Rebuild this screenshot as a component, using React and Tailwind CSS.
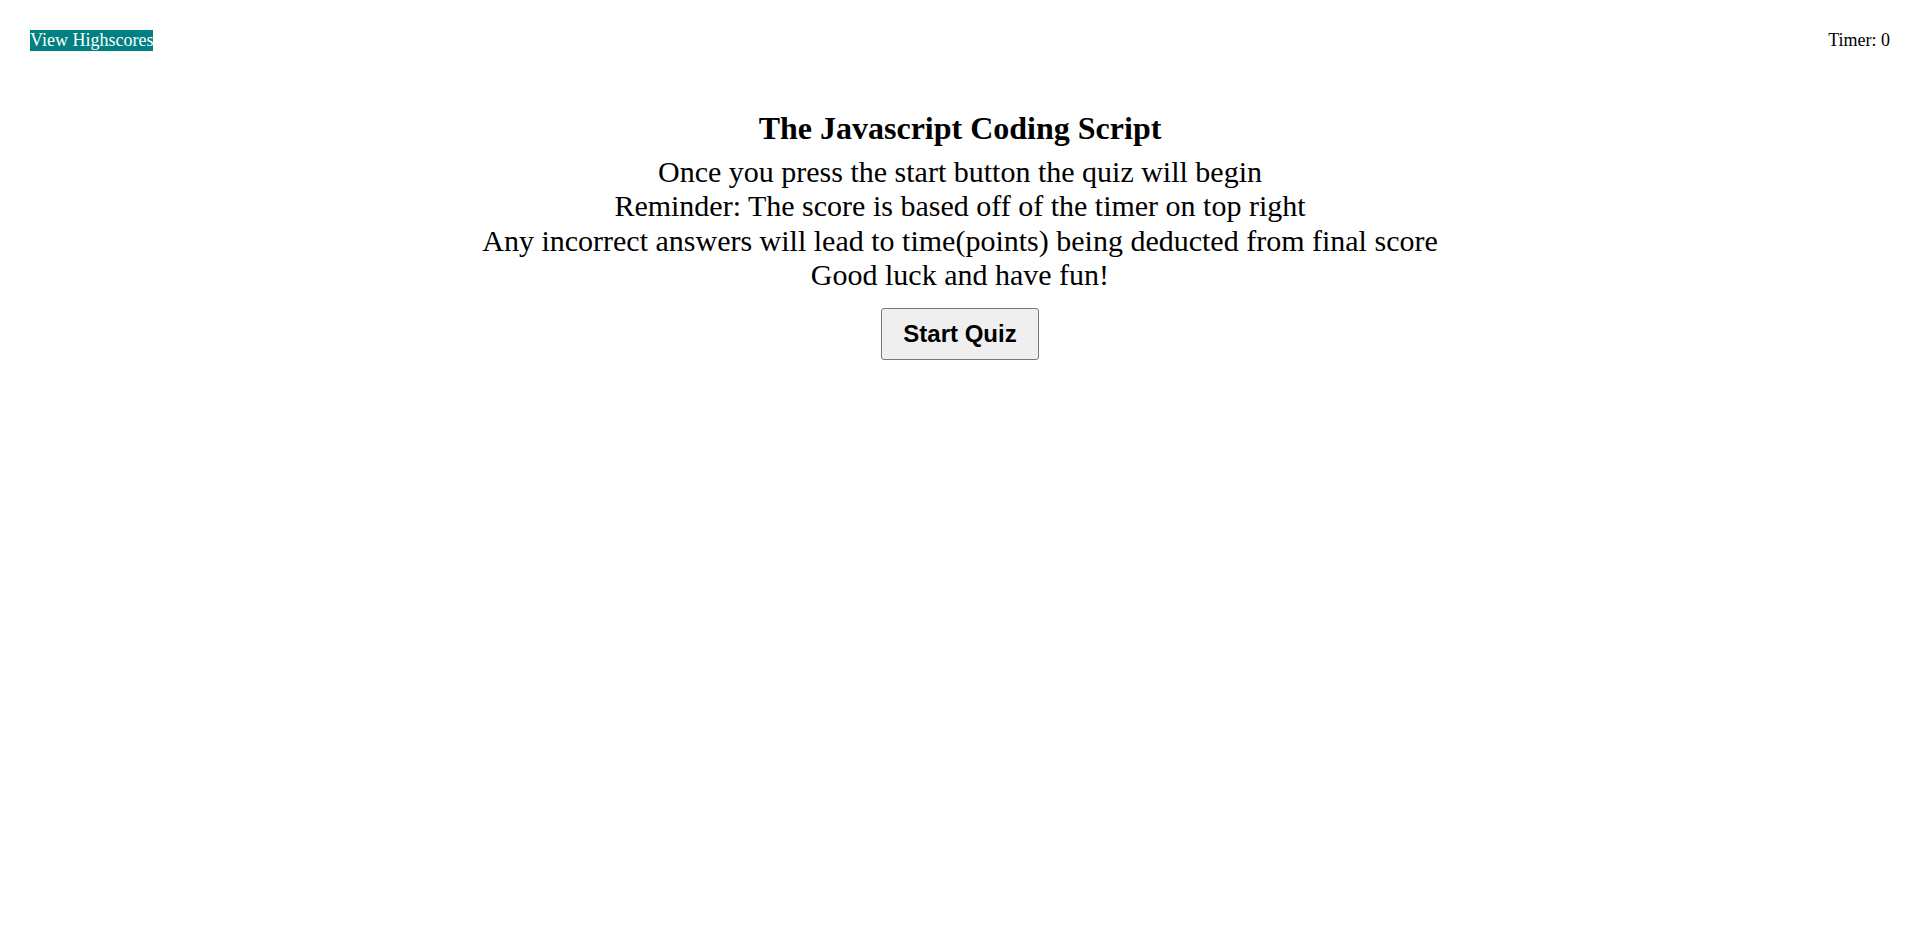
export default function App() {
  return (
    <div className="min-h-screen bg-white text-black">
      <div className="font-['Liberation_Serif',serif]">
        <header className="flex justify-between items-start px-[30px] pt-[30px]">
          <span className="bg-[#008080] text-white text-[18px] leading-[21px]">View Highscores</span>
          <span className="text-[18px] leading-[21px]">Timer: 0</span>
        </header>
        <main className="flex flex-col items-center text-center mt-[59px]">
          <h1 className="font-bold text-[32px] leading-[37px]">The Javascript Coding Script</h1>
          <p className="text-[30px] leading-[34.3px] mt-[8px]">
            Once you press the start button the quiz will begin
            <br />
            Reminder: The score is based off of the timer on top right
            <br />
            Any incorrect answers will lead to time(points) being deducted from final score
            <br />
            Good luck and have fun!
          </p>
          <button className="mt-[16px] font-['Liberation_Sans',sans-serif] font-bold text-[24px] leading-[28px] px-[21px] py-[11px] bg-[#efefef] border border-[#767676] rounded-[3px] text-black">
            Start Quiz
          </button>
        </main>
      </div>
    </div>
  );
}
